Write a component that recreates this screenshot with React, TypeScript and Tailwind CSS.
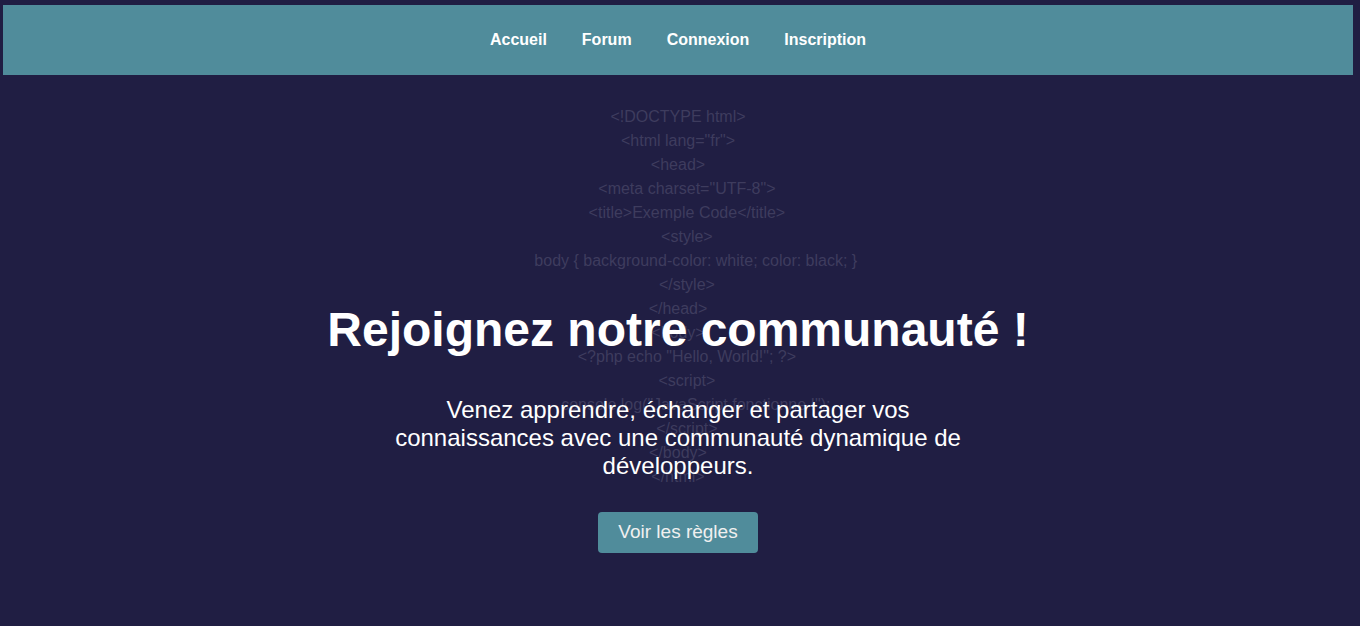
import React from 'react';

const codeLines = [
  '<!DOCTYPE html>',
  '<html lang="fr">',
  '<head>',
  '    <meta charset="UTF-8">',
  '    <title>Exemple Code</title>',
  '    <style>',
  '        body { background-color: white; color: black; }',
  '    </style>',
  '</head>',
  '<body>',
  '    <?php echo "Hello, World!"; ?>',
  '    <script>',
  '        console.log("JavaScript fonctionne !");',
  '    </script>',
  '</body>',
  '</html>',
];

const links = ['Accueil', 'Forum', 'Connexion', 'Inscription'];

const App: React.FC = () => {
  return (
    <div className="min-h-screen bg-[#201e43] pt-[5px] font-['Liberation_Sans',Arial,sans-serif] text-white">
      <nav className="ml-[3px] flex h-[70px] w-[1350px] items-center justify-center gap-[35px] bg-[#508c9b]">
        {links.map((l) => (
          <a key={l} href="#" className="text-base font-bold text-white">
            {l}
          </a>
        ))}
      </nav>

      <main className="relative ml-[3px] w-[1350px]">
        {/* code en fond */}
        <div className="absolute inset-x-0 top-[30px] flex flex-col items-center text-base leading-6 text-[#3e3c5e] select-none">
          {codeLines.map((line, i) => (
            <div key={i} className="whitespace-pre">
              {line}
            </div>
          ))}
        </div>

        <div className="relative flex flex-col items-center pt-[227px] text-center">
          <h1 className="text-[48px] leading-[55px] font-bold">Rejoignez notre communauté !</h1>
          <p className="mt-[39px] max-w-[600px] text-[24px] leading-[28px]">
            Venez apprendre, échanger et partager vos connaissances avec une communauté dynamique de développeurs.
          </p>
          <button className="mt-[32px] h-[41px] w-[160px] rounded-[4px] bg-[#508c9b] text-[19px] text-[#f0f0f0]">
            Voir les règles
          </button>
        </div>
      </main>
    </div>
  );
};

export default App;
